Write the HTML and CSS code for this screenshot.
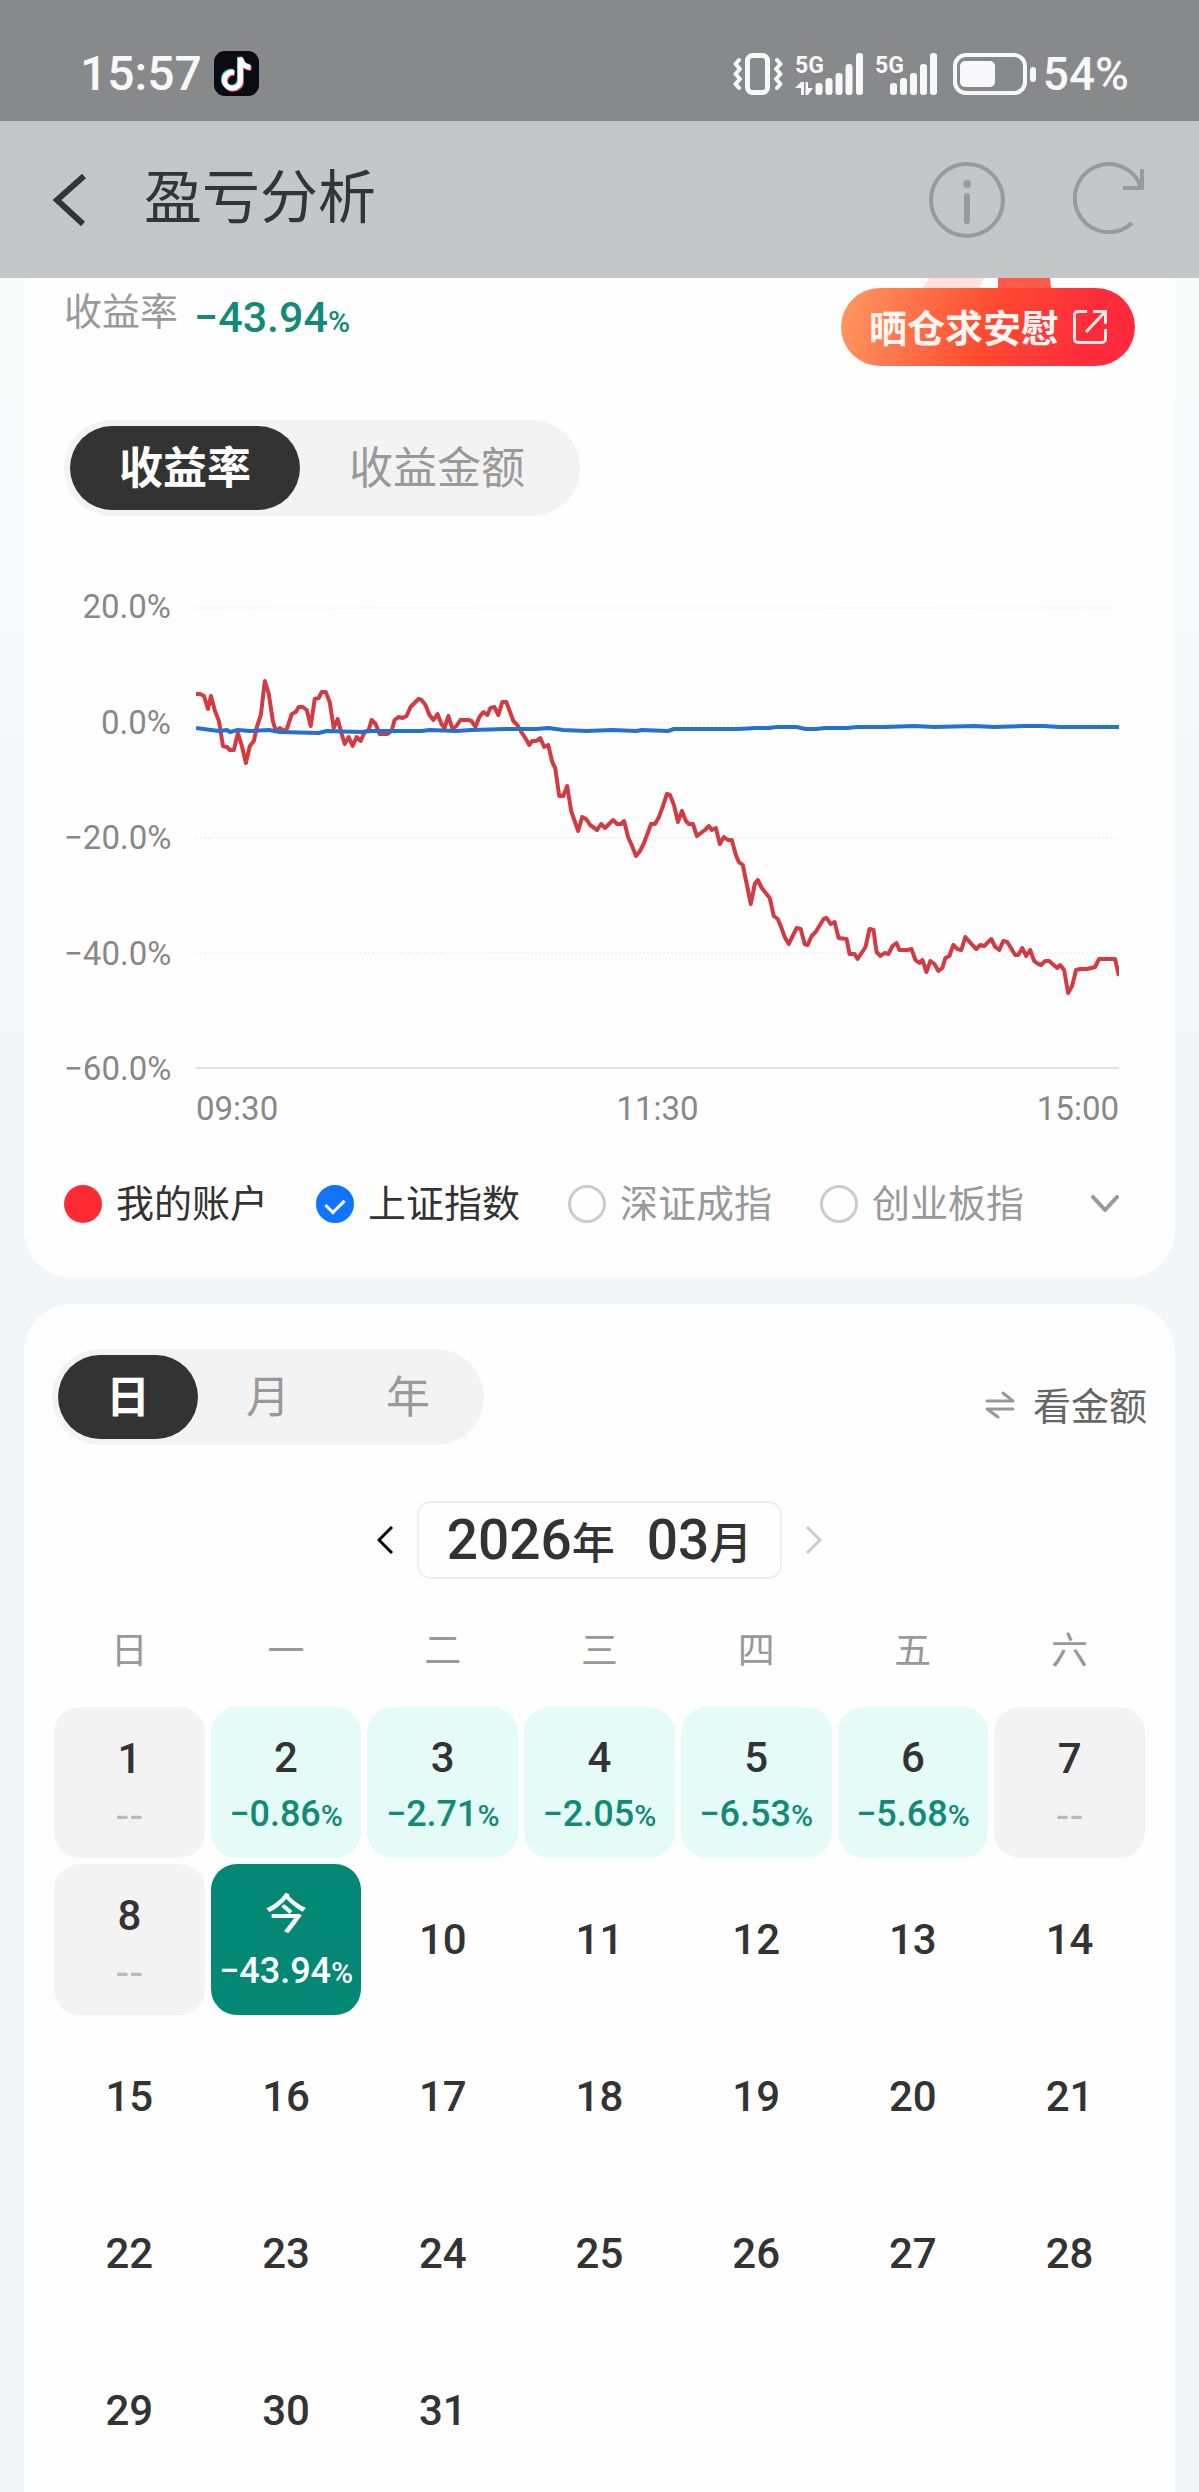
FILE: index.html
```
<!DOCTYPE html>
<html lang="zh-CN">
<head>
  <meta charset="UTF-8">
  <meta name="viewport" content="width=device-width, initial-scale=1.0">
  <title>盈亏分析</title>
  <link rel="stylesheet" href="styles.css">
</head>
<body>
  <div class="status-bar">
    <div class="status-left">
      <span>15:57</span>
      <svg class="app-icon" width="45" height="45" viewBox="0 0 45 45">
        <rect width="45" height="45" rx="11" fill="#0b0b14"/>
        <g fill="none" stroke-width="5">
          <path d="M19 20.5a8 8 0 1 0 6.500 8V6c1 6 5 9 10 9.500" stroke="#4fdbe0"/>
          <path d="M21 22.500a8 8 0 1 0 6.500 8V8c1 6 5 9 10 9.500" stroke="#ee4a5e"/>
          <path d="M20 21.500a8 8 0 1 0 6.500 8V7c1 6 5 9 10 9.500" stroke="#fff"/>
        </g>
      </svg>
    </div>
    <div class="status-right">
      <svg width="50" height="42" viewBox="0 0 50 42" fill="none" stroke="#f8f8fa">
        <rect x="14.500" y="2.500" width="20" height="37" rx="5" stroke-width="5"/>
        <path d="M6 7L2.500 11 7 16 2.500 21 7 26 2.500 31 6 35M44 7l3.500 4-4.500 5 4.500 5-4.500 5 4.500 5-3.500 4" stroke-width="4" stroke-linecap="round" stroke-linejoin="round"/>
      </svg>
      <svg width="68" height="42" viewBox="0 0 68 42" fill="#f8f8fa">
        <text class="net-label" x="0" y="20">5G</text>
        <path d="M6 29h3v13H6V35H0zM10.500 29h2.500v6h5l-5 7h-2.500z"/>
        <rect x="20.500" y="30" width="7" height="12" rx="3"/>
        <rect x="30.500" y="25" width="7" height="17" rx="3"/>
        <rect x="40.500" y="20" width="7" height="22" rx="3"/>
        <rect x="50.500" y="11" width="7" height="31" rx="3"/>
        <rect x="61" y="0" width="7" height="42" rx="3"/>
      </svg>
      <svg width="62" height="42" viewBox="0 0 62 42" fill="#f8f8fa">
        <text class="net-label" x="0" y="20">5G</text>
        <rect x="15" y="30" width="7" height="12" rx="3"/>
        <rect x="25" y="25" width="7" height="17" rx="3"/>
        <rect x="35" y="20" width="7" height="22" rx="3"/>
        <rect x="45" y="11" width="7" height="31" rx="3"/>
        <rect x="55" y="0" width="7" height="42" rx="3"/>
      </svg>
      <svg class="battery" width="84" height="42" viewBox="0 0 84 42" fill="#f8f8fa">
        <rect x="2" y="2" width="70" height="38" rx="11" fill="none" stroke="#f8f8fa" stroke-width="4"/>
        <rect x="7" y="8" width="35" height="26" rx="5"/>
        <rect x="77" y="14" width="6" height="15" rx="3"/>
      </svg>
      <span>54%</span>
    </div>
  </div>

  <header class="nav-bar">
    <button class="icon-btn" aria-label="返回">
      <svg width="36" height="52" viewBox="0 0 36 52" fill="none" stroke="#333436" stroke-width="6">
        <path d="M32 2L5 26l26 24"/>
      </svg>
    </button>
    <h1>盈亏分析</h1>
    <button class="icon-btn" aria-label="说明">
      <svg width="76" height="76" viewBox="0 0 76 76" fill="none" stroke="#999a9c">
        <circle cx="38" cy="38" r="36" stroke-width="4"/>
        <path d="M38 34v25" stroke-width="6" stroke-linecap="round"/>
        <circle cx="38" cy="22" r="4" fill="#999a9c" stroke="none"/>
      </svg>
    </button>
    <button class="icon-btn refresh" aria-label="刷新">
      <svg width="72" height="76" viewBox="0 0 72 76" fill="none" stroke="#999a9c" stroke-width="4">
        <path d="M59 61A34 34 0 1 1 68 25"/>
        <path d="M69 7v19H50"/>
      </svg>
    </button>
  </header>

  <main>
    <section class="card">
      <div class="summary">
        <span class="summary-label">收益率</span>
        <span class="summary-value">−43.94<small>%</small></span>
        <div class="promo">
          <svg width="130" height="10" viewBox="0 0 130 10">
            <path d="M6 0h55l-5 10H0z" fill="#fde1de"/>
            <path d="M75 0h52l1 10H75z" fill="#fc5a4a"/>
          </svg>
          <button class="promo-btn">
            <span>晒仓求安慰</span>
            <svg width="34" height="34" viewBox="0 0 34 34" fill="none" stroke="#ffe9e6" stroke-width="3">
              <path d="M14 1.500H5A3.500 3.500 0 0 0 1.500 5v24A3.500 3.500 0 0 0 5 32.500h24a3.500 3.500 0 0 0 3.500-3.500V19"/>
              <path d="M20 1.500h12.500V14M32 2L13 22"/>
            </svg>
          </button>
        </div>
      </div>

      <div class="segment">
        <button class="active">收益率</button>
        <button>收益金额</button>
      </div>

      <div class="chart">
        <div class="y-axis">
          <span>20.0%</span>
          <span>0.0%</span>
          <span>−20.0%</span>
          <span>−40.0%</span>
          <span>−60.0%</span>
        </div>
        <svg class="plot" viewBox="0 -20 925 500" preserveAspectRatio="none" role="img" aria-label="收益率走势">
          <path class="grid-line" d="M0 0H925M0 115H925M0 230H925M0 345H925"/>
          <path class="base-line" d="M0 460H925"/>
          <polyline class="line-account" points="0,86 4,86 8,88 12,101 15,88 19,103 23,113 27,138 31,139 34,142 38,142 42,125 46,138 50,155 54,138 58,133 61,119 65,107 69,73 73,86 77,113 80,123 84,120 88,123 91,121 96,106 100,104 103,99 107,99 111,102 115,118 119,91 123,90 126,84 130,84 134,94 138,120 142,111 146,126 149,136 153,129 157,138 161,129 165,133 169,124 173,122 176,112 180,116 184,126 192,126 196,123 199,112 203,109 207,110 211,108 215,99 219,95 223,91 226,92 230,97 234,107 238,112 242,106 246,116 249,120 253,108 257,121 261,118 265,112 273,112 276,113 280,119 284,109 288,104 292,107 295,100 299,99 303,107 307,94 311,94 314,102 318,113 322,117 326,124 330,130 334,137 337,133 341,133 345,130 349,139 353,137 357,154 360,160 364,188 368,188 372,178 376,203 383,223 387,209 391,211 395,217 402,222 406,216 410,220 418,212 422,216 426,216 429,213 433,229 437,238 441,248 445,243 449,235 456,216 460,216 464,209 468,198 472,186 475,187 479,197 483,214 487,203 491,213 494,216 498,216 502,228 510,222 514,218 517,222 521,220 525,236 529,229 533,232 537,232 541,247 544,254 548,257 556,296 560,276 563,272 567,280 575,290 579,308 583,311 586,318 590,329 594,336 602,320 606,321 610,336 613,337 617,328 621,324 629,311 632,310 636,316 640,314 644,330 652,331 655,346 660,346 663,351 667,345 671,339 675,321 679,322 682,344 686,348 690,345 694,346 698,338 702,335 705,342 713,342 717,341 721,352 725,355 728,352 732,364 736,353 740,356 744,363 748,360 751,350 755,348 759,337 763,341 767,342 771,329 778,337 782,341 786,337 790,338 797,331 801,339 805,342 809,333 813,334 821,347 824,347 828,340 832,348 836,342 840,353 844,356 847,357 851,353 855,353 863,360 866,357 870,362 874,385 878,378 882,362 886,361 893,361 897,360 901,359 905,351 921,351 925,368"/>
          <polyline class="line-index" points="0,120 15,122 23,123 31,122 34,124 42,122 54,123 73,122 84,124 123,125 131,123 165,124 176,123 226,123 234,122 261,123 276,122 311,121 341,121 353,120 368,122 391,123 417,122 441,123 447,122 473,123 479,121 544,121 561,120 574,120 582,119 602,119 611,121 621,121 631,120 652,120 663,119 690,119 720,118 740,119 780,118 800,119 830,118 850,118 865,119 890,119 925,119"/>
        </svg>
      </div>
      <div class="x-axis">
        <span>09:30</span>
        <span>11:30</span>
        <span>15:00</span>
      </div>

      <div class="legend">
        <div class="legend-item on"><span class="dot"></span>我的账户</div>
        <label class="legend-item on"><input type="checkbox" checked>上证指数</label>
        <label class="legend-item"><input type="checkbox">深证成指</label>
        <label class="legend-item"><input type="checkbox">创业板指</label>
        <button class="icon-btn more" aria-label="更多指数">
          <svg width="28" height="18" viewBox="0 0 28 18" fill="none" stroke="#999" stroke-width="4" stroke-linecap="round" stroke-linejoin="round">
            <path d="M2 2l12 13L26 2"/>
          </svg>
        </button>
      </div>
    </section>

    <section class="card calendar-card">
      <div class="calendar-head">
        <div class="segment period">
          <button class="active">日</button>
          <button>月</button>
          <button>年</button>
        </div>
        <button class="switch-btn">
          <svg width="30" height="28" viewBox="0 0 30 28" fill="none" stroke="#999" stroke-width="3" stroke-linecap="round" stroke-linejoin="round">
            <path d="M2 10h26L18 2M28 18H2l11 8"/>
          </svg>
          <span>看金额</span>
        </button>
      </div>

      <div class="month-nav">
        <button class="icon-btn" aria-label="上个月">
          <svg width="16" height="28" viewBox="0 0 16 28" fill="none" stroke="#000" stroke-width="3">
            <path d="M15 1L2 14l13 13"/>
          </svg>
        </button>
        <button class="month"><span>2026<b>年</b></span><span>03<b>月</b></span></button>
        <button class="icon-btn" aria-label="下个月">
          <svg width="16" height="28" viewBox="0 0 16 28" fill="none" stroke="#ccc" stroke-width="3">
            <path d="M1 1l13 13L1 27"/>
          </svg>
        </button>
      </div>

      <table class="calendar">
        <thead>
          <tr><th>日</th><th>一</th><th>二</th><th>三</th><th>四</th><th>五</th><th>六</th></tr>
        </thead>
        <tbody>
          <tr>
            <td class="closed">1<div class="rate">--</div></td>
            <td class="loss">2<div class="rate">−0.86<small>%</small></div></td>
            <td class="loss">3<div class="rate">−2.71<small>%</small></div></td>
            <td class="loss">4<div class="rate">−2.05<small>%</small></div></td>
            <td class="loss">5<div class="rate">−6.53<small>%</small></div></td>
            <td class="loss">6<div class="rate">−5.68<small>%</small></div></td>
            <td class="closed">7<div class="rate">--</div></td>
          </tr>
          <tr>
            <td class="closed">8<div class="rate">--</div></td>
            <td class="today">今<div class="rate">−43.94<small>%</small></div></td>
            <td>10</td><td>11</td><td>12</td><td>13</td><td>14</td>
          </tr>
          <tr><td>15</td><td>16</td><td>17</td><td>18</td><td>19</td><td>20</td><td>21</td></tr>
          <tr><td>22</td><td>23</td><td>24</td><td>25</td><td>26</td><td>27</td><td>28</td></tr>
          <tr><td>29</td><td>30</td><td>31</td><td></td><td></td><td></td><td></td></tr>
        </tbody>
      </table>
    </section>
  </main>
</body>
</html>
```
FILE: styles.css
```
* {
  box-sizing: border-box;
}
body {
  margin: 0;
  background: #f3f5f8;
  color: #333;
  font-family: Roboto, "Noto Sans CJK SC", sans-serif;
  font-size: 38px;
}
button {
  padding: 0;
  border: none;
  background: none;
  color: inherit;
  font: inherit;
  cursor: pointer;
}
svg {
  display: block;
}

/* status bar */
.status-bar {
  display: flex;
  justify-content: space-between;
  align-items: center;
  height: 121px;
  padding: 26px 70px 0 80px;
  background: #88898b;
  color: #f8f8fa;
  font-size: 46px;
  font-weight: 500;
}
.status-left,
.status-right {
  display: flex;
  align-items: center;
  gap: 12px;
}
.status-left {
  font-size: 48px;
}
.status-right svg {
  overflow: visible;
}
.net-label {
  font-size: 23px;
  font-weight: 700;
}
.battery {
  margin: 0 -6px 0 4px;
}

/* nav bar */
.nav-bar {
  display: flex;
  align-items: center;
  height: 157px;
  padding: 0 54px 0 52px;
  background: #c5c6c8;
}
.nav-bar h1 {
  flex: 1;
  margin: 0 0 4px 56px;
  color: #333436;
  font-size: 58px;
  font-weight: 400;
  line-height: 80px;
}
.refresh {
  margin-left: 68px;
}

/* cards */
main {
  background: linear-gradient(#f9fbfb, #f3f5f8 800px);
}
.card {
  margin: 0 24px 26px;
  padding: 0 40px 46px;
  border-radius: 0 0 48px 48px;
  background: #fefefe;
}
.summary {
  display: flex;
  align-items: flex-start;
}
.summary-label {
  margin-top: 6px;
  color: #999;
  line-height: 56px;
}
.summary-value {
  margin: 6px 0 0 16px;
  color: #128a76;
  font-size: 43px;
  font-weight: 500;
  line-height: 66px;
}
.summary-value small {
  font-size: 30px;
}
.promo {
  display: flex;
  flex-direction: column;
  align-items: center;
  margin-left: auto;
}
.promo-btn {
  display: flex;
  align-items: center;
  gap: 14px;
  height: 78px;
  padding: 0 28px;
  border-radius: 39px;
  background: linear-gradient(105deg, #ff9a62, #ff4a30 50%, #ff2a3c 85%);
  color: #fff5f2;
  font-weight: 700;
}
.promo-btn span,
.switch-btn span {
  padding-bottom: 4px;
}

/* segmented control */
.segment {
  display: inline-flex;
  height: 96px;
  margin-top: 54px;
  padding: 6px;
  border-radius: 48px;
  background: #f3f3f3;
  color: #999;
  font-size: 44px;
}
.segment button {
  padding: 0 49px 6px;
  border-radius: 42px;
}
.segment .active {
  background: #333;
  color: #fff;
  font-weight: 700;
}

/* chart */
.chart {
  display: flex;
  gap: 25px;
  height: 500px;
  margin-top: 72px;
  padding-right: 16px;
}
.y-axis {
  display: flex;
  flex-direction: column;
  justify-content: space-between;
  width: 107px;
  color: #888;
  font-size: 33px;
  line-height: 38px;
  text-align: right;
  white-space: nowrap;
}
.plot {
  flex: 1;
  min-width: 0;
  height: 500px;
  fill: none;
  stroke-width: 4;
  stroke-linejoin: round;
}
.grid-line {
  stroke: #e8e8e8;
  stroke-width: 1;
  stroke-dasharray: 2 2;
}
.base-line {
  stroke: #e3e3e3;
  stroke-width: 2;
}
.line-account {
  stroke: #d43a41;
}
.line-index {
  stroke: #2671cc;
}
.x-axis {
  display: flex;
  justify-content: space-between;
  padding: 0 16px 0 132px;
  color: #888;
  font-size: 33px;
  line-height: 42px;
}

/* legend */
.legend {
  display: flex;
  align-items: center;
  gap: 48px;
  height: 56px;
  margin-top: 46px;
}
.legend-item {
  display: flex;
  align-items: center;
  gap: 14px;
  color: #999;
  line-height: 56px;
  white-space: nowrap;
}
.legend-item.on {
  color: #333;
}
.dot,
.legend input {
  width: 38px;
  height: 38px;
  border-radius: 50%;
}
.dot {
  background: #ff2b33;
}
.legend input {
  display: flex;
  justify-content: center;
  appearance: none;
  margin: 0;
  border: 3px solid #ccc;
}
.legend input:checked {
  border-color: #1074ff;
  background: #1074ff;
}
.legend input:checked::after {
  content: "";
  width: 15px;
  height: 9px;
  margin-top: 10px;
  border-left: 3px solid #fff;
  border-bottom: 3px solid #fff;
  transform: rotate(-45deg);
}
.more {
  margin: 0 16px 0 auto;
}

/* calendar */
.calendar-card {
  margin-bottom: 0;
  padding: 45px 28px 0;
  border-radius: 48px 48px 0 0;
}
.calendar-head {
  display: flex;
  justify-content: space-between;
  align-items: center;
}
.period {
  margin-top: 0;
}
.period button {
  padding: 0 48px 6px;
}
.switch-btn {
  display: flex;
  align-items: center;
  gap: 18px;
  padding-top: 16px;
  color: #666;
}
.month-nav {
  display: flex;
  justify-content: center;
  align-items: center;
  gap: 24px;
  margin-top: 56px;
}
.month {
  display: flex;
  justify-content: center;
  align-items: center;
  gap: 32px;
  height: 78px;
  padding: 4px 28px 0;
  border: 2px solid #eee;
  border-radius: 14px;
  font-size: 55px;
  font-weight: 500;
  line-height: 70px;
}
.month b {
  font-size: 43px;
  font-weight: 500;
}
.calendar {
  width: calc(100% + 8px);
  margin: 18px -4px 0;
  border-spacing: 6px;
  table-layout: fixed;
  text-align: center;
}
.calendar th {
  height: 98px;
  padding: 0 0 8px;
  color: #999;
  font-size: 37px;
  font-weight: 400;
}
.calendar td {
  height: 151px;
  padding: 0;
  border-radius: 26px;
  font-size: 42px;
  font-weight: 500;
  line-height: 56px;
}
.calendar .closed,
.calendar .loss,
.calendar .today {
  padding-top: 9px;
}
.calendar .closed {
  background: #f3f3f3;
}
.calendar .loss {
  background: #e4fbf8;
}
.calendar .today {
  background: #028875;
  color: #fff;
}
.rate {
  color: #128a76;
  font-size: 36px;
  white-space: nowrap;
}
.rate small {
  font-size: 30px;
}
.closed .rate {
  color: #bbb;
  font-family: "Liberation Sans", sans-serif;
  font-size: 42px;
  font-weight: 400;
}
.today .rate {
  color: #fff;
}
```
